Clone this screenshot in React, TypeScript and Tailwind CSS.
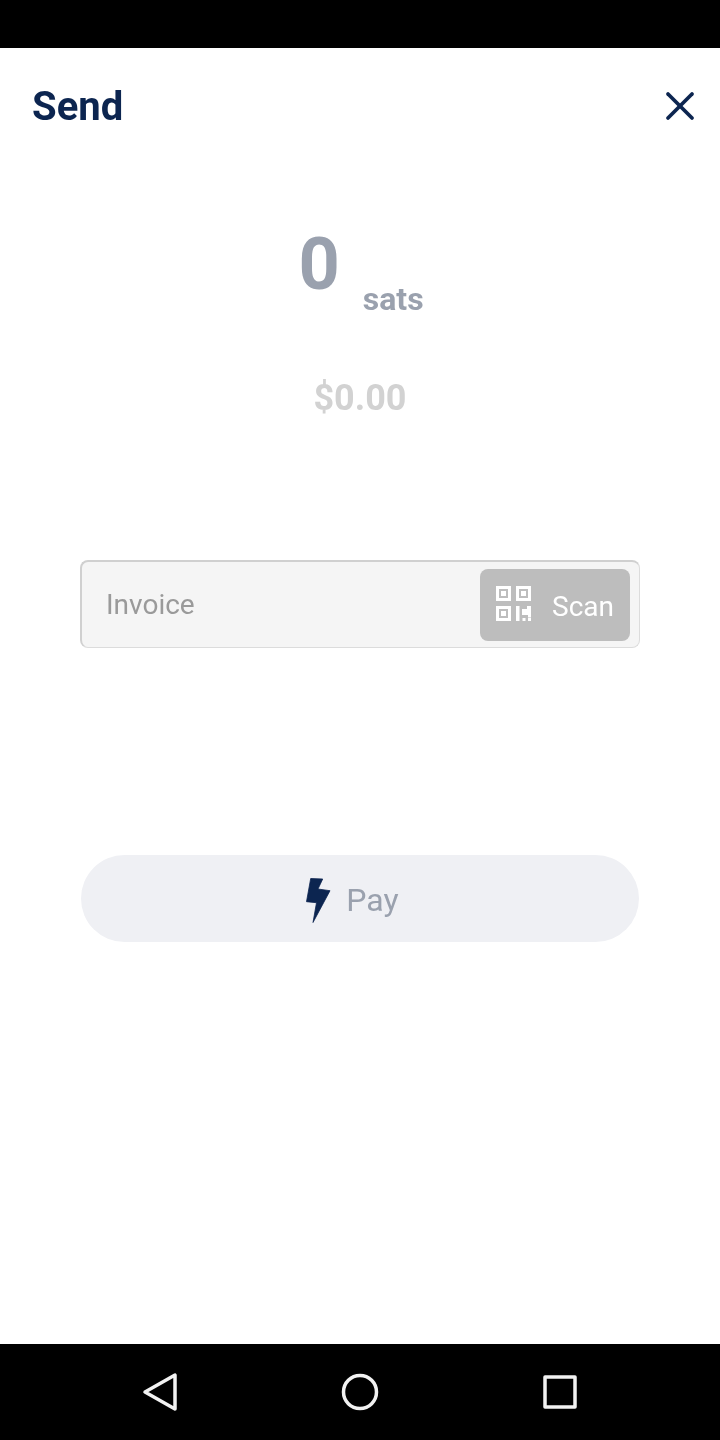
import React from "react";
import { X } from "lucide-react";

const QrIcon = () => (
  <svg width="35" height="35" viewBox="0 0 35 35" fill="#fff" className="mb-[3px]">
    <path fillRule="evenodd" d="M0 0h15v15H0zM3 3v9h9V3zM5 5h5v5H5zM20 0h15v15H20zM23 3v9h9V3zM25 5h5v5h-5zM0 20h15v15H0zM3 23v9h9v-9zM5 25h5v5H5z" />
    <path d="M20 20h3.500v15H20zM26 23h5v-3h4v11.500h-3V29h-6zM26.500 32h3v3h-3zM32 32h3v3h-3z" />
  </svg>
);

const App = () => {
  return (
    <div className="flex flex-col w-[720px] h-[1440px] bg-white font-['Roboto',sans-serif] [will-change:transform]">
      <div className="h-12 bg-black" />
      <div className="flex-1 flex flex-col">
        {/* header */}
        <div className="flex items-center justify-between h-[116px] pl-8 pr-[16px]">
          <h1 className="text-[40px] font-bold text-[#0c2550] mt-[2px]">Send</h1>
          <X className="w-[48px] h-[48px]" color="#0c2550" strokeWidth={1.9} />
        </div>
        {/* amount */}
        <div className="flex justify-center items-start pl-[2px] mt-[53px] h-[96px]">
          <span className="text-[72px] leading-[96px] font-bold text-[#9aa1ae]">0</span>
          <span className="text-[32px] leading-[40px] font-bold text-[#9aa1ae] ml-[23px] mt-[62px]">sats</span>
        </div>
        <div className="text-center text-[36px] leading-[48px] font-bold text-[#d2d2d2] mt-[61px]">$0.00</div>
        {/* invoice input */}
        <div className="flex items-center justify-between mx-[80px] mt-[138px] h-[88px] pl-[24px] pr-[9px] bg-[#f5f5f5] rounded-lg border-t-2 border-l-2 border-r border-b border-t-[#d0d0d0] border-l-[#d0d0d0] border-r-[#dcdcdc] border-b-[#dcdcdc]">
          <span className="text-[28px] text-[#9a9a9a]">Invoice</span>
          <div className="flex items-center gap-[21px] w-[150px] h-[72px] mt-[1px] pl-[16px] rounded-lg bg-[#bdbdbd]">
            <QrIcon />
            <span className="text-[28px] text-white mt-[3px]">Scan</span>
          </div>
        </div>
        {/* pay */}
        <div className="flex items-center justify-center gap-[15px] mx-[81px] mt-[207px] pr-[15px] h-[87px] rounded-[44px] bg-[#eff0f4]">
          <svg width="25" height="45" viewBox="0 0 25 45" fill="#0c2550" stroke="#0c2550" strokeWidth="0.8" strokeLinejoin="round" className="mt-[4px]">
            <path d="M4.700 0.500L16.700 1L12 11L24 12.700L7 44.500L10.500 24.700L0.500 23.700z" />
          </svg>
          <span className="text-[32px] text-[#9aa1ae] mt-[2px]">Pay</span>
        </div>
      </div>
      {/* android nav bar */}
      <div className="flex items-center justify-between h-24 bg-black pl-[142px] pr-[142px]">
        <svg width="36" height="40" viewBox="0 0 36 40" fill="none" stroke="#f2f2f2" strokeWidth="3.5" strokeLinejoin="round">
          <path d="M33 3v34L3 20z" />
        </svg>
        <svg width="38" height="38" viewBox="0 0 38 38" fill="none" stroke="#f2f2f2" strokeWidth="3.5">
          <circle cx="19" cy="19" r="16.5" />
        </svg>
        <svg width="36" height="36" viewBox="0 0 36 36" fill="none" stroke="#f2f2f2" strokeWidth="3.5" strokeLinejoin="round">
          <path d="M3 3h30v30H3z" />
        </svg>
      </div>
    </div>
  );
};

export default App;
